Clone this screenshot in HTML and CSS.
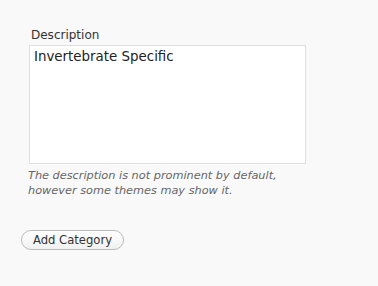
FILE: index.html
```html
<!DOCTYPE html>
<html lang="en">
<head>
  <meta charset="UTF-8">
  <title>Add Category</title>
  <link rel="stylesheet" href="styles.css">
</head>
<body>
  <form class="cat-form">
    <div class="form-field">
      <label for="description">Description</label>
      <textarea id="description">Invertebrate Specific</textarea>
      <p class="hint">The description is not prominent by default, however some themes may show it.</p>
    </div>
    <button type="button" class="btn">Add Category</button>
  </form>
</body>
</html>
```

FILE: styles.css
```css
* {
  margin: 0;
  padding: 0;
  box-sizing: border-box;
}

body {
  background: #f9f9f9;
  font-family: 'DejaVu Sans', Verdana, sans-serif;
  color: #333;
  width: 378px;
  height: 286px;
}

.cat-form {
  padding: 28px 0 0 21px;
}

.form-field {
  display: flex;
  flex-direction: column;
  padding-left: 8px;
}

label {
  font-size: 12px;
  line-height: 15px;
  padding-left: 2px;
  margin-bottom: 2px;
}

textarea {
  width: 277px;
  height: 119px;
  border: 1px solid #dfdfdf;
  background: #fff;
  font-family: inherit;
  font-size: 13.4px;
  color: #222;
  padding: 3px 4px;
  resize: none;
  outline: none;
}

.hint {
  font-size: 11.3px;
  font-style: italic;
  color: #666;
  line-height: 15px;
  margin-top: 4px;
  margin-left: -1px;
  width: 280px;
}

.btn {
  margin-top: 32px;
  font-family: inherit;
  font-size: 11.6px;
  color: #333;
  background: linear-gradient(#fff, #f1f1f1);
  border: 1px solid #bbb;
  border-radius: 11px;
  padding: 2px 10px;
  height: 20px;
  width: 103px;
}
```
